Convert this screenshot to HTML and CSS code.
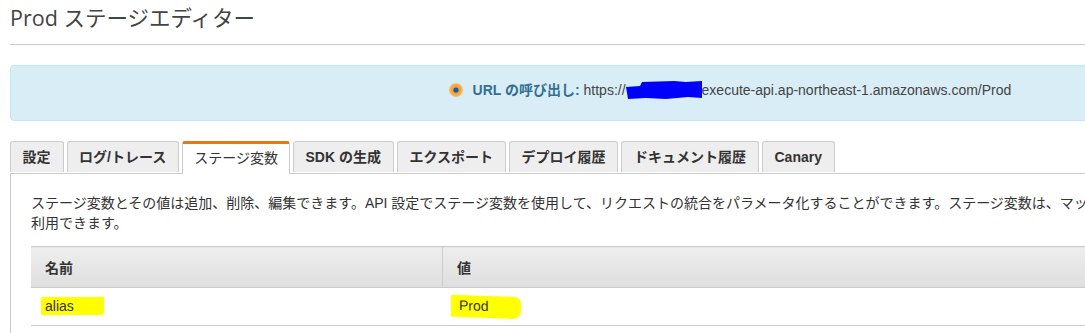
FILE: index.html
```html
<!DOCTYPE html>
<html lang="ja">

<head>
  <meta charset="UTF-8">
  <meta name="viewport" content="width=device-width, initial-scale=1.0">
  <title>Prod ステージエディター</title>
  <link rel="stylesheet" href="styles.css">
</head>

<body>

  <div class="page">
    <h1 class="page-title">Prod ステージエディター</h1>

    <!-- 呼び出し URL -->
    <div class="invoke-box">
      <span class="invoke-icon">
        <svg width="14" height="14" viewBox="0 0 14 14">
          <defs>
            <radialGradient id="dotGlow" cx="50%" cy="50%" r="50%">
              <stop offset="55%" stop-color="#f0a23a" />
              <stop offset="100%" stop-color="#f6c16f" />
            </radialGradient>
          </defs>
          <circle cx="7" cy="7" r="7" fill="url(#dotGlow)" />
          <circle cx="7" cy="7" r="2.6" fill="#1e5aa8" />
        </svg>
      </span>
      <span class="invoke-label">URL の呼び出し:</span>
      <span class="invoke-url">https://<span class="redact-blue"><svg width="76" height="18" viewBox="0 0 76 18">
            <path d="M0 6 L14 5 L16 1 L48 0 L60 1 L76 0 L76 17 L62 16 L40 18 L20 17 L2 18 Z" fill="#0000ff" />
          </svg></span>execute-api.ap-northeast-1.amazonaws.com/Prod</span>
    </div>

    <!-- タブ -->
    <ul class="tabs">
      <li class="tab">設定</li>
      <li class="tab">ログ/トレース</li>
      <li class="tab active">ステージ変数</li>
      <li class="tab">SDK の生成</li>
      <li class="tab">エクスポート</li>
      <li class="tab">デプロイ履歴</li>
      <li class="tab">ドキュメント履歴</li>
      <li class="tab">Canary</li>
    </ul>

    <div class="tab-panel">
      <p class="help-text">ステージ変数とその値は追加、削除、編集できます。API 設定でステージ変数を使用して、リクエストの統合をパラメータ化することができます。ステージ変数は、マッピングテンプレートの $context オブジェクトでも<br>利用できます。</p>

      <table class="var-table">
        <thead>
          <tr>
            <th class="col-name">名前</th>
            <th>値</th>
          </tr>
        </thead>
        <tbody>
          <tr>
            <td><span class="mark mark-name">alias</span></td>
            <td><span class="mark mark-value">Prod</span></td>
          </tr>
        </tbody>
      </table>
    </div>
  </div>

</body>

</html>
```

FILE: styles.css
```css
/* ページ全体 */
html,
body {
  margin: 0;
  padding: 0;
  overflow: hidden;
  background-color: #fff;
}

body {
  font-family: "Liberation Sans", "Noto Sans CJK JP", sans-serif;
  font-size: 13px;
  color: #333;
}

.page {
  width: 1440px;
  padding-left: 10px;
}

.page-title {
  margin: 0;
  padding: 4px 0 12px;
  line-height: 28px;
  font-family: "Open Sans", "Noto Sans CJK JP", sans-serif;
  font-size: 21.5px;
  font-weight: normal;
  color: #444;
  border-bottom: 1px solid #ccc;
}

/* 呼び出し URL ボックス */
.invoke-box {
  margin-top: 20px;
  padding: 14px 15px 20px;
  line-height: 20px;
  font-size: 14px;
  text-align: center;
  background-color: #d9edf7;
  border: 1px solid #bce8f1;
  border-radius: 4px;
}

.invoke-icon svg {
  vertical-align: -2px;
  margin-right: 6px;
}

.invoke-label {
  font-weight: bold;
  color: #31708f;
}

.invoke-url {
  color: #444;
}

.redact-blue svg {
  vertical-align: -4px;
}

/* タブ */
.tabs {
  list-style: none;
  margin: 20px 0 0;
  padding: 0;
  display: flex;
  gap: 3px;
  border-bottom: 1px solid #ccc;
}

.tab {
  height: 30px;
  line-height: 30px;
  padding: 0 12px 0 11.5px;
  margin-bottom: -1px;
  font-size: 14px;
  font-weight: bold;
  color: #333;
  background-color: #eee;
  border: 1px solid #ccc;
  border-bottom: none;
  border-top-left-radius: 3px;
  border-top-right-radius: 3px;
}

.tab.active {
  font-weight: normal;
  background-color: #fff;
  border-top: 3px solid #e07b12;
  height: 29px;
  line-height: 28px;
  padding: 0 11px 1px;
}

/* タブの中身 */
.tab-panel {
  border-left: 1px solid #ccc;
  padding: 19px 0 40px 20px;
}

.help-text {
  margin: 0;
  line-height: 20px;
  font-size: 14px;
  color: #333;
}

.var-table {
  width: 100%;
  margin-top: 13px;
  border-collapse: collapse;
  font-size: 14px;
}

.var-table th {
  height: 40px;
  padding: 0 14px;
  text-align: left;
  font-weight: bold;
  color: #333;
  background: linear-gradient(#eeeeee, #dedede);
  border-top: 1px solid #ccc;
  border-bottom: 1px solid #ccc;
}

.var-table th.col-name {
  width: 383px;
  border-right: 1px solid #ccc;
}

.var-table td {
  height: 37px;
  padding: 0 14px;
  color: #333;
  border-bottom: 1px solid #ccc;
}

/* 黄色のマーカー */
.mark {
  display: inline-block;
  background-color: #ffff00;
  line-height: 18px;
}

.mark-name {
  margin-left: -4px;
  padding: 0 30px 0 4px;
  border-radius: 2px 0 3px 1px;
  vertical-align: 2px;
}

.mark-value {
  margin-left: -6px;
  padding: 1px 32px 3px 8px;
  border-radius: 1px 6px 8px 1px;
  transform: skewY(2deg);
}
```
